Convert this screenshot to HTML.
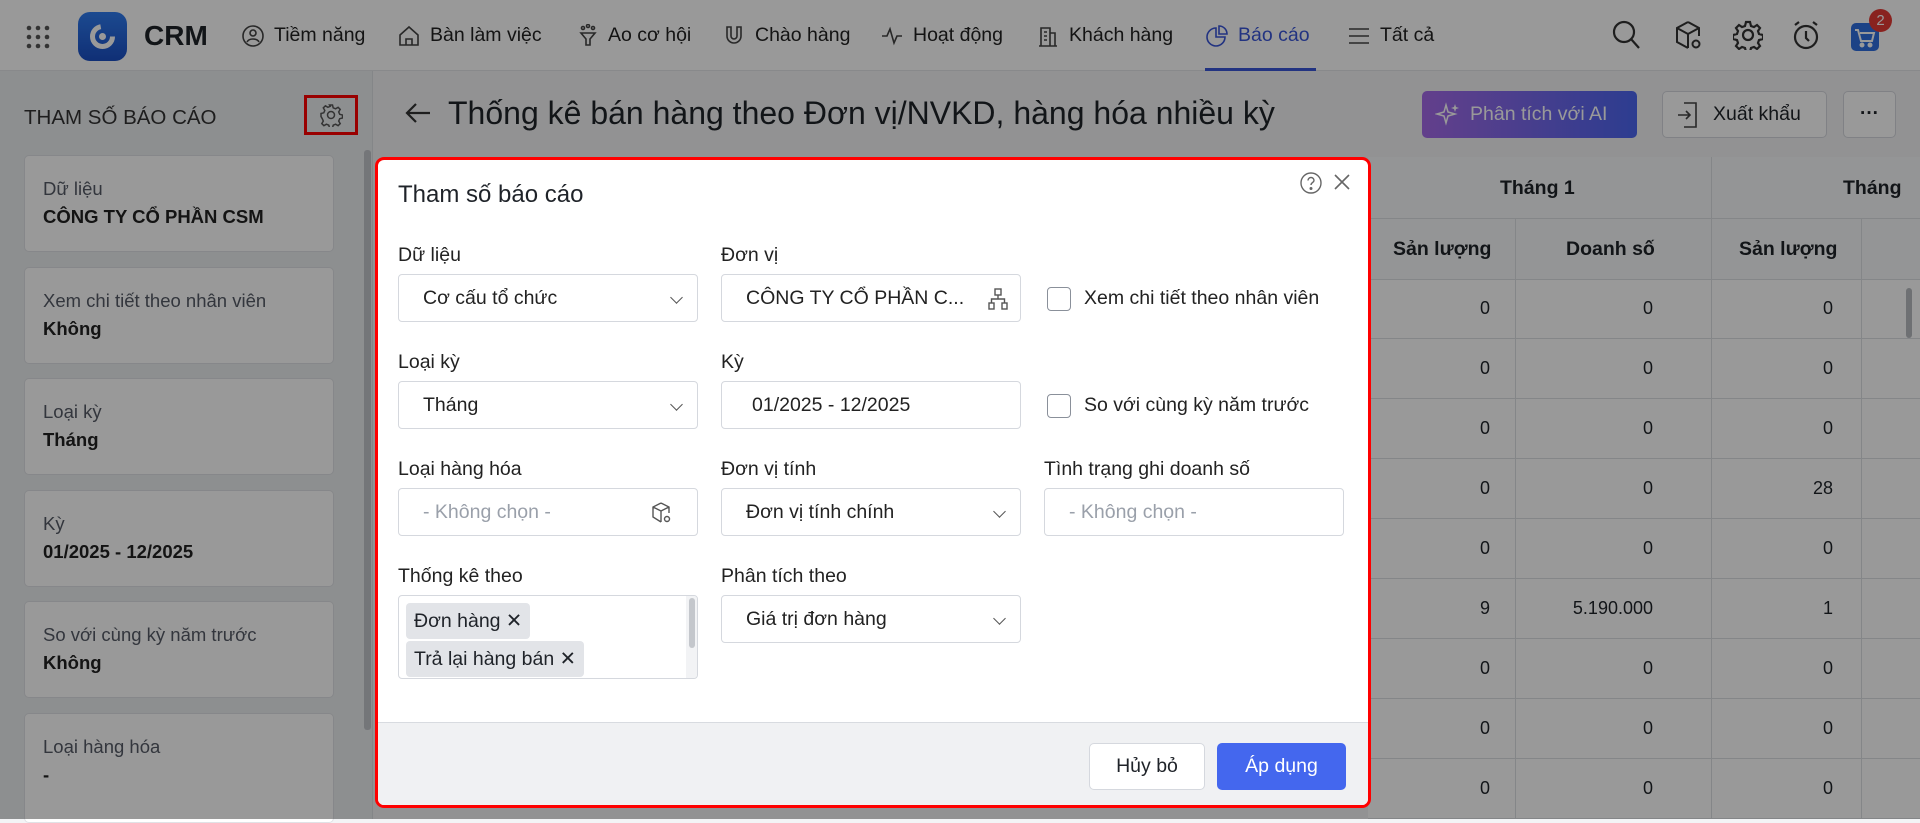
<!DOCTYPE html>
<html><head><meta charset="utf-8"><style>
*{box-sizing:border-box;margin:0;padding:0}
body{width:1920px;height:819px;overflow:hidden;position:relative;font-family:"Liberation Sans","Noto Sans CJK SC",sans-serif;color:#1f2329;background:#f3f4f6}
.a{position:absolute}
.hdr{left:0;top:0;width:1920px;height:71px;background:#fff;border-bottom:1px solid #e3e5e8}
.nav{top:0;height:71px;display:flex;align-items:center;font-size:19.5px;color:#222}
.nav svg{margin-right:9px}
.side{left:0;top:71px;width:373px;height:748px;background:#eceef1;border-right:1px solid #dcdfe3}
.card{left:24px;width:310px;height:97px;background:#fff;border:1px solid #e0e2e6;border-radius:5px;padding:22px 18px}
.card .l{font-size:18.5px;color:#555b66}
.card .v{font-size:18.5px;font-weight:bold;margin-top:6px;color:#222}
.tbl{left:1368px;top:157px;width:552px;height:662px;background:#fff}
.cell{font-size:18px;text-align:right}
.ov{left:0;top:0;width:1920px;height:819px;background:rgba(0,0,0,0.4)}
.modal{left:375px;top:157px;width:996px;height:651px;background:#fff;border:3px solid #f00;border-radius:9px;overflow:hidden}
.lab{font-size:19.5px;color:#222}
.inp{height:48px;border:1px solid #d5d8de;border-radius:4px;background:#fff;font-size:19.5px;display:flex;align-items:center;padding:0 24px;color:#222}
.chk{width:24px;height:24px;border:1.5px solid #8a909a;border-radius:4px}
.chev{position:absolute;right:16px;top:18px;width:9px;height:9px;border-right:1.5px solid #555;border-bottom:1.5px solid #555;transform:rotate(45deg)}
.tag{background:#e2e4e8;border-radius:4px;font-size:19.5px;padding:6px 8px;display:inline-block}
</style></head><body>
<div class="a hdr"></div>
<svg class="a" style="left:26px;top:25px" width="24" height="24"><g fill="#555"><circle cx="3" cy="3" r="2.3"/><circle cx="12" cy="3" r="2.3"/><circle cx="21" cy="3" r="2.3"/><circle cx="3" cy="12" r="2.3"/><circle cx="12" cy="12" r="2.3"/><circle cx="21" cy="12" r="2.3"/><circle cx="3" cy="21" r="2.3"/><circle cx="12" cy="21" r="2.3"/><circle cx="21" cy="21" r="2.3"/></g></svg>
<div class="a" style="left:78px;top:12px;width:49px;height:49px;border-radius:12px;background:linear-gradient(#2f7cf0,#1b4fc4)"></div>
<svg class="a" style="left:86px;top:20px" width="33" height="33"><circle cx="16.5" cy="16.5" r="10" fill="none" stroke="#fff" stroke-width="5" stroke-dasharray="45 18"/><circle cx="16.5" cy="16.5" r="3.5" fill="#fff"/></svg>
<div class="a" style="left:144px;top:20px;font-size:28px;font-weight:bold">CRM</div>
<div class="a nav" style="left:241px"><svg width="24" height="24" fill="none" stroke="#444" stroke-width="1.6"><circle cx="12" cy="12" r="10"/><circle cx="12" cy="9" r="3"/><path d="M6 18c2-4 10-4 12 0"/></svg>Tiềm năng</div>
<div class="a nav" style="left:397px"><svg width="24" height="24" fill="none" stroke="#444" stroke-width="1.6"><path d="M3 11L12 3l9 8v10H3z"/><path d="M9 21v-6h6v6"/></svg>Bàn làm việc</div>
<div class="a nav" style="left:577px"><svg width="22" height="24" fill="none" stroke="#444" stroke-width="1.6"><circle cx="6" cy="4" r="1.5"/><circle cx="11" cy="2" r="1.5"/><circle cx="16" cy="4" r="1.5"/><path d="M4 9h14l-5 6v6h-4v-6z"/></svg>Ao cơ hội</div>
<div class="a nav" style="left:722px"><svg width="24" height="24" fill="none" stroke="#444" stroke-width="1.6"><path d="M5 3v9a7 7 0 0014 0V3h-4v9a3 3 0 01-6 0V3z"/></svg>Chào hàng</div>
<div class="a nav" style="left:880px"><svg width="24" height="24" fill="none" stroke="#444" stroke-width="1.6"><path d="M2 12h5l3-7 4 14 3-7h5"/></svg>Hoạt động</div>
<div class="a nav" style="left:1036px"><svg width="24" height="24" fill="none" stroke="#444" stroke-width="1.6"><path d="M3 22h18M5 22V4h9v18M14 9h5v13M8 8h3M8 12h3M8 16h3"/></svg>Khách hàng</div>
<div class="a nav" style="left:1205px;color:#3a55d8"><svg width="24" height="24" fill="none" stroke="#3a55d8" stroke-width="1.6"><path d="M11 4a9 9 0 1 0 9 9h-9z"/><path d="M14 2v8h8a8 8 0 00-8-8z"/></svg>Báo cáo</div>
<div class="a" style="left:1205px;top:68px;width:111px;height:3px;background:#3a55d8"></div>
<div class="a nav" style="left:1347px"><svg width="24" height="24" fill="none" stroke="#444" stroke-width="1.6"><path d="M2 5h20M2 12h20M2 19h20"/></svg>Tất cả</div>
<svg class="a" style="left:1612px;top:20px" width="30" height="32" fill="none" stroke="#333" stroke-width="2.2"><circle cx="12" cy="12" r="10"/><path d="M19 19l8 9"/></svg>
<svg class="a" style="left:1674px;top:20px" width="30" height="32" fill="none" stroke="#333" stroke-width="2"><path d="M14 2l11 6v8M14 2L3 8v14l11 6M3 8l11 6 11-6M14 14v14"/><circle cx="22" cy="24" r="3.5"/></svg>
<svg class="a" style="left:1733px;top:20px" width="30" height="30" fill="none" stroke="#333" stroke-width="2.2"><circle cx="15" cy="15" r="5"/><path d="M13 2h4l1 4 3 1 3-2 3 3-2 3 1 3 4 1v4l-4 1-1 3 2 3-3 3-3-2-3 1-1 4h-4l-1-4-3-1-3 2-3-3 2-3-1-3-4-1v-4l4-1 1-3-2-3 3-3 3 2 3-1z"/></svg>
<svg class="a" style="left:1791px;top:20px" width="30" height="32" fill="none" stroke="#333" stroke-width="2.2"><circle cx="15" cy="17" r="11"/><path d="M15 11v7l3 3M4 5l4-3M26 5l-4-3"/></svg>
<div class="a" style="left:1851px;top:23px;width:28px;height:28px;background:#2f6fe0;border-radius:5px"></div>
<svg class="a" style="left:1853px;top:27px" width="24" height="22" fill="none" stroke="#fff" stroke-width="2"><path d="M2 3h3l3 11h11l2-8H7"/><circle cx="9" cy="18" r="1.5" fill="#fff"/><circle cx="17" cy="18" r="1.5" fill="#fff"/></svg>
<div class="a" style="left:1869px;top:9px;width:23px;height:23px;background:#e53935;border-radius:50%;color:#fff;font-size:15px;text-align:center;line-height:23px">2</div>

<div class="a side"></div>
<div class="a" style="left:24px;top:106px;font-size:20.5px;color:#333">THAM SỐ BÁO CÁO</div>
<div class="a" style="left:304px;top:95px;width:54px;height:40px;border:3px solid #f00"></div>
<svg class="a" style="left:319px;top:103px" width="24" height="24" fill="none" stroke="#555" stroke-width="1.5"><circle cx="12" cy="12" r="3.5"/><path d="M10.5 2h3l.7 2.8 2.4 1 2.5-1.5 2.1 2.1-1.5 2.5 1 2.4 2.8.7v3l-2.8.7-1 2.4 1.5 2.5-2.1 2.1-2.5-1.5-2.4 1-.7 2.8h-3l-.7-2.8-2.4-1-2.5 1.5-2.1-2.1 1.5-2.5-1-2.4L2 13.5v-3l2.8-.7 1-2.4-1.5-2.5 2.1-2.1 2.5 1.5 2.4-1z"/></svg>
<div class="a card" style="top:155px"><div class="l">Dữ liệu</div><div class="v">CÔNG TY CỔ PHẦN CSM</div></div>
<div class="a card" style="top:267px"><div class="l">Xem chi tiết theo nhân viên</div><div class="v">Không</div></div>
<div class="a card" style="top:378px"><div class="l">Loại kỳ</div><div class="v">Tháng</div></div>
<div class="a card" style="top:490px"><div class="l">Kỳ</div><div class="v">01/2025 - 12/2025</div></div>
<div class="a card" style="top:601px"><div class="l">So với cùng kỳ năm trước</div><div class="v">Không</div></div>
<div class="a card" style="top:713px;height:110px"><div class="l">Loại hàng hóa</div><div class="v">-</div></div>
<div class="a" style="left:364px;top:150px;width:7px;height:580px;background:#c2c5ca;border-radius:3px"></div>

<svg class="a" style="left:404px;top:101px" width="28" height="24" fill="none" stroke="#333" stroke-width="2.2"><path d="M26 12H3M12 3l-9 9 9 9"/></svg>
<div class="a" style="left:448px;top:95px;font-size:32px;color:#1f2329">Thống kê bán hàng theo Đơn vị/NVKD, hàng hóa nhiều kỳ</div>
<div class="a" style="left:1422px;top:91px;width:215px;height:47px;border-radius:5px;background:linear-gradient(90deg,#a56ae8,#4b66f0);color:#fff;font-size:19.5px;line-height:47px;padding-left:48px">Phân tích với AI</div>
<svg class="a" style="left:1435px;top:102px" width="26" height="26" fill="#fff"><path d="M11 3l2 7 7 2-7 2-2 7-2-7-7-2 7-2z" fill="none" stroke="#fff" stroke-width="1.5"/><path d="M20 2l1 3 3 1-3 1-1 3-1-3-3-1 3-1z"/></svg>
<div class="a" style="left:1662px;top:91px;width:165px;height:47px;border-radius:5px;background:#fff;border:1px solid #d5d8de;font-size:19.5px;line-height:45px;padding-left:50px">Xuất khẩu</div>
<svg class="a" style="left:1676px;top:101px" width="24" height="28" fill="none" stroke="#444" stroke-width="1.6"><path d="M8 2h12v24H8M2 14h12M10 10l4 4-4 4"/></svg>
<div class="a" style="left:1843px;top:91px;width:53px;height:47px;border-radius:5px;background:#fff;border:1px solid #d5d8de;font-size:19px;text-align:center;line-height:44px;font-weight:bold">···</div>

<div class="a tbl"></div>
<div class="a" style="left:1368px;top:157px;width:552px;height:122px;background:#f7f8fa"></div>
<div class="a" style="left:1368px;top:218px;width:552px;height:1px;background:#dcdfe3"></div>
<div class="a" style="left:1368px;top:279px;width:552px;height:1px;background:#dcdfe3"></div>
<div class="a" style="left:1711px;top:157px;width:1px;height:662px;background:#dcdfe3"></div>
<div class="a" style="left:1515px;top:218px;width:1px;height:601px;background:#dcdfe3"></div>
<div class="a" style="left:1861px;top:218px;width:1px;height:601px;background:#dcdfe3"></div>
<div class="a" style="left:1500px;top:177px;font-size:19.5px;font-weight:bold">Tháng 1</div>
<div class="a" style="left:1843px;top:177px;font-size:19.5px;font-weight:bold">Tháng</div>
<div class="a" style="left:1393px;top:238px;font-size:19.5px;font-weight:bold">Sản lượng</div>
<div class="a" style="left:1566px;top:238px;font-size:19.5px;font-weight:bold">Doanh số</div>
<div class="a" style="left:1739px;top:238px;font-size:19.5px;font-weight:bold">Sản lượng</div>
<div class="a" style="left:1906px;top:288px;width:6px;height:50px;background:#b8bbc0;border-radius:3px"></div>
<div id="rows"></div>
<script>
var v=[["0","0","0"],["0","0","0"],["0","0","0"],["0","0","28"],["0","0","0"],["9","5.190.000","1"],["0","0","0"],["0","0","0"],["0","0","0"]];
var h="";for(var i=0;i<9;i++){var y=279+i*60;h+='<div class="a" style="left:1368px;top:'+(y+59)+'px;width:552px;height:1px;background:#dcdfe3"></div>';
var r=[1490,1653,1833];for(var j=0;j<3;j++)h+='<div class="a cell" style="left:'+(r[j]-150)+'px;width:150px;top:'+(y+19)+'px">'+v[i][j]+'</div>';}
document.getElementById("rows").innerHTML=h;
</script>

<div class="a ov"></div>
<div class="a modal">
 <div class="a" style="left:20px;top:21px;font-size:24px">Tham số báo cáo</div>
 <svg class="a" style="left:921px;top:11px" width="24" height="24" fill="none" stroke="#666" stroke-width="1.4"><circle cx="12" cy="12" r="10"/><path d="M9 9.5a3 3 0 116 0c0 2-3 2-3 4.5"/><circle cx="12" cy="17.5" r=".8" fill="#666"/></svg>
 <svg class="a" style="left:955px;top:13px" width="18" height="18" stroke="#666" stroke-width="1.6"><path d="M2 2l14 14M16 2L2 16"/></svg>

 <div class="a lab" style="left:20px;top:84px">Dữ liệu</div>
 <div class="a lab" style="left:343px;top:84px">Đơn vị</div>
 <div class="a inp" style="left:20px;top:114px;width:300px">Cơ cấu tổ chức<span class="chev"></span></div>
 <div class="a inp" style="left:343px;top:114px;width:300px">CÔNG TY CỔ PHẦN C...</div>
 <svg class="a" style="left:610px;top:128px" width="20" height="22" fill="none" stroke="#555" stroke-width="1.4"><rect x="7" y="1" width="6" height="6"/><rect x="1" y="15" width="5" height="6"/><rect x="14" y="15" width="5" height="6"/><path d="M10 7v4M3.5 15v-4h13v4"/></svg>
 <div class="a chk" style="left:669px;top:127px"></div>
 <div class="a lab" style="left:706px;top:127px">Xem chi tiết theo nhân viên</div>

 <div class="a lab" style="left:20px;top:191px">Loại kỳ</div>
 <div class="a lab" style="left:343px;top:191px">Kỳ</div>
 <div class="a inp" style="left:20px;top:221px;width:300px">Tháng<span class="chev"></span></div>
 <div class="a inp" style="left:343px;top:221px;width:300px;padding-left:30px">01/2025 - 12/2025</div>
 <div class="a chk" style="left:669px;top:234px"></div>
 <div class="a lab" style="left:706px;top:234px">So với cùng kỳ năm trước</div>

 <div class="a lab" style="left:20px;top:298px">Loại hàng hóa</div>
 <div class="a lab" style="left:343px;top:298px">Đơn vị tính</div>
 <div class="a lab" style="left:666px;top:298px">Tình trạng ghi doanh số</div>
 <div class="a inp" style="left:20px;top:328px;width:300px;color:#9aa0aa">- Không chọn -</div>
 <svg class="a" style="left:273px;top:341px" width="22" height="24" fill="none" stroke="#555" stroke-width="1.4"><path d="M10 2l8 4v6M10 2L2 6v10l8 5M2 6l8 4 8-4M10 10v11"/><circle cx="16" cy="18" r="2.5"/></svg>
 <div class="a inp" style="left:343px;top:328px;width:300px">Đơn vị tính chính<span class="chev"></span></div>
 <div class="a inp" style="left:666px;top:328px;width:300px;color:#9aa0aa">- Không chọn -</div>

 <div class="a lab" style="left:20px;top:405px">Thống kê theo</div>
 <div class="a lab" style="left:343px;top:405px">Phân tích theo</div>
 <div class="a" style="left:20px;top:435px;width:300px;height:84px;border:1px solid #d5d8de;border-radius:4px;background:#fff;overflow:hidden">
  <div class="a tag" style="left:7px;top:7px">Đơn hàng ✕</div>
  <div class="a tag" style="left:7px;top:45px">Trả lại hàng bán ✕</div>
  <div class="a" style="left:287px;top:0;width:12px;height:84px;background:#f2f3f5"></div>
  <div class="a" style="left:290px;top:2px;width:6px;height:50px;background:#c4c7cc;border-radius:3px"></div>
 </div>
 <div class="a inp" style="left:343px;top:435px;width:300px">Giá trị đơn hàng<span class="chev"></span></div>

 <div class="a" style="left:0;top:562px;width:996px;height:90px;background:#f0f1f3;border-top:1px solid #d8dbe0"></div>
 <div class="a" style="left:711px;top:583px;width:116px;height:47px;background:#fff;border:1px solid #d5d8de;border-radius:5px;font-size:19.5px;text-align:center;line-height:45px">Hủy bỏ</div>
 <div class="a" style="left:839px;top:583px;width:129px;height:47px;background:#4467ee;border-radius:5px;color:#fff;font-size:19.5px;text-align:center;line-height:47px">Áp dụng</div>
</div>
</body></html>
